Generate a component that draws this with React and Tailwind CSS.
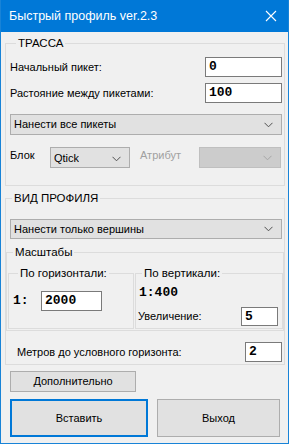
const Chevron = ({ light }) => (
  <svg width="9" height="6" viewBox="0 0 9 6" className="shrink-0">
    <polyline
      points="0.5,0.8 4.5,4.8 8.5,0.8"
      fill="none"
      stroke={light ? "#a6a6a6" : "#505050"}
      strokeWidth="1"
    />
  </svg>
);

const Combo = ({ text, className = "", disabled }) => (
  <div
    className={`flex items-center justify-between border pl-[3px] pr-[8px] ${
      disabled ? "bg-[#cccccc] border-[#bfbfbf]" : "bg-[#e1e1e1] border-[#adadad]"
    } ${className}`}
  >
    <span className="truncate">{text}</span>
    <Chevron light={disabled} />
  </div>
);

const Field = ({ value, className = "" }) => (
  <div
    className={`flex items-center bg-white border border-[#7a7a7a] pl-[3px] font-['Liberation_Mono',monospace] font-bold text-[13px] text-black ${className}`}
  >
    {value}
  </div>
);

const Group = ({ title, className = "", children, indent = "ml-[6px]" }) => (
  <fieldset className={`border border-[#dcdcdc] ${className}`}>
    <legend className={`${indent} px-[2px] leading-[14px] text-[11.5px]`}>{title}</legend>
    {children}
  </fieldset>
);

export default function App() {
  return (
    <div className="flex flex-col w-[289px] h-[444px] bg-[#1883d7] px-px pb-px font-['Liberation_Sans',Arial,sans-serif] text-[11px] text-black">
      {/* заголовок окна */}
      <div className="flex items-center justify-between h-[32px] bg-[#0078d7] pl-[8px] pr-[11px] text-white text-[12.5px]">
        <span>Быстрый профиль ver.2.3</span>
        <svg width="12" height="12" viewBox="0 0 12 12">
          <path d="M1 1 L11 11 M11 1 L1 11" stroke="white" strokeWidth="1.1" />
        </svg>
      </div>

      <div className="flex-1 flex flex-col bg-[#f0f0f0] pl-[4px]">
        <Group title="ТРАССА" className="mt-[4px] w-[280px] h-[150px] pl-[4px] pr-[2px]">
          <div className="flex flex-col">
            <div className="flex items-center justify-between mt-[7px] h-[20px]">
              <span>Начальный пикет:</span>
              <Field value="0" className="w-[77px] h-[20px]" />
            </div>
            <div className="flex items-center justify-between mt-[6px] h-[20px]">
              <span>Растояние между пикетами:</span>
              <Field value="100" className="w-[77px] h-[20px]" />
            </div>
            <Combo text="Нанести все пикеты" className="mt-[11px] h-[21px]" />
            <div className="flex items-start mt-[12px] h-[21px]">
              <span className="w-[40px] leading-[14px] pt-[1px]">Блок</span>
              <Combo text="Qtick" className="w-[80px] h-[21px] pt-[2px]" />
              <span className="ml-[10px] w-[59px] leading-[14px] pt-[1px] text-[#a0a0a0]">Атрибут</span>
              <Combo disabled text="" className="w-[82px] h-[21px]" />
            </div>
          </div>
        </Group>

        <Group title="ВИД ПРОФИЛЯ" className="mt-[5px] w-[280px] h-[174px]">
          <div className="flex flex-col">
            <Combo text="Нанести только вершины" className="mt-[14px] mx-[4px] mr-[2px] h-[20px]" />

            <Group title="Масштабы" indent="ml-[5px]" className="mt-[6px] h-[86px] pl-px pb-px">
              <div className="flex gap-px mt-[7px] h-[63px]">
                <Group title="По горизонтали:" indent="ml-[5px]" className="w-[126px] pl-[4px]">
                  <div className="flex items-center mt-[11px]">
                    <span className="w-[28px] font-['Liberation_Mono',monospace] font-bold text-[13px]">1:</span>
                    <Field value="2000" className="w-[61px] h-[20px]" />
                  </div>
                </Group>
                <Group title="По вертикали:" indent="ml-[4px]" className="flex-1 pl-[2px] pr-[4px]">
                  <div className="mt-[5px] pl-[1px] leading-[15px] font-['Liberation_Mono',monospace] font-bold text-[13px]">
                    1:400
                  </div>
                  <div className="flex items-center justify-between mt-[7px] h-[19px]">
                    <span>Увеличение:</span>
                    <Field value="5" className="w-[37px] h-[19px]" />
                  </div>
                </Group>
              </div>
            </Group>

            <div className="flex items-center justify-between mt-[11px] h-[20px] pl-[11px] pr-[2px]">
              <span>Метров до условного горизонта:</span>
              <Field value="2" className="w-[37px] h-[20px]" />
            </div>
          </div>
        </Group>

        <button className="mt-[6px] ml-[5px] w-[126px] h-[21px] bg-[#e1e1e1] border border-[#adadad]">
          Дополнительно
        </button>

        <div className="flex gap-[9px] mt-[7px] ml-[5px]">
          <button className="w-[138px] h-[38px] bg-[#e1e1e1] border-2 border-[#0078d7]">Вставить</button>
          <button className="w-[123px] h-[38px] bg-[#e1e1e1] border border-[#adadad]">Выход</button>
        </div>
      </div>
    </div>
  );
}
